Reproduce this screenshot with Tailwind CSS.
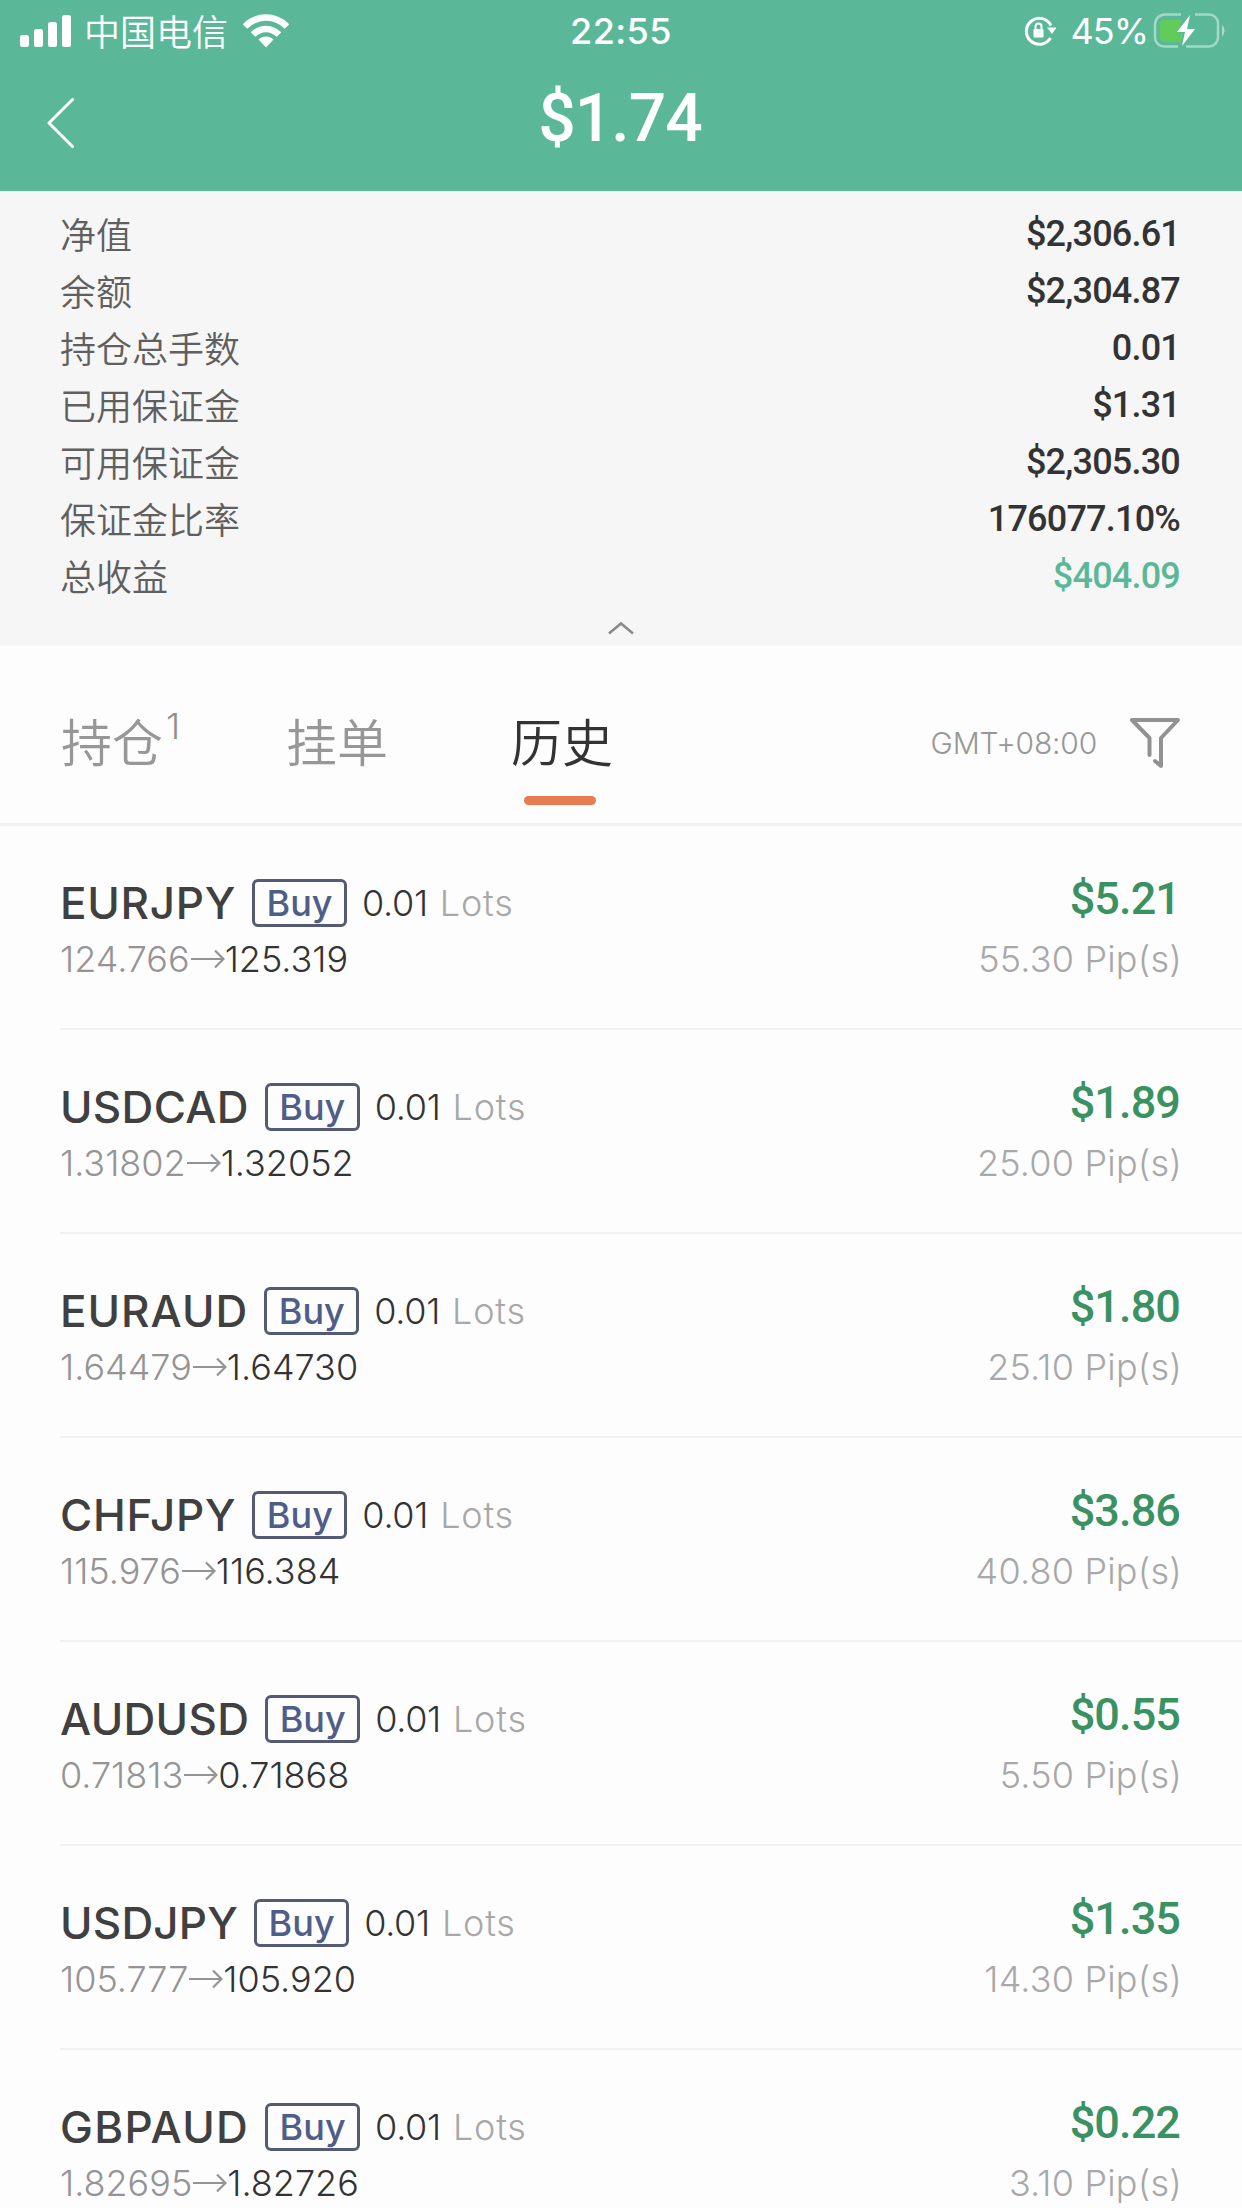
<!DOCTYPE html>
<html lang="zh-CN">
<head>
<meta charset="utf-8">
<title>历史</title>
<script src="https://cdn.jsdelivr.net/npm/@tailwindcss/browser@4"></script>
</head>
<body class="h-[2208px] w-[1242px] overflow-hidden bg-[#fdfdfd] font-['Inter','Noto_Sans_CJK_SC',sans-serif] text-4xl/[48px] text-[#333]">

<header class="h-[191px] bg-[#5ab899] text-white">
  <div class="grid h-[62px] grid-cols-3 items-center pl-5 pr-[15px]">
    <div class="flex items-center">
      <svg class="h-8 w-[52px]" viewBox="0 0 52 32" fill="#fff"><rect x="0" y="20" width="9" height="12" rx="2.5"/><rect x="14" y="14" width="9" height="18" rx="2.5"/><rect x="28" y="7" width="9" height="25" rx="2.5"/><rect x="42" y="0" width="9" height="32" rx="2.5"/></svg>
      <span class="mb-[3px] ml-3 font-['Noto_Sans_CJK_SC',sans-serif] font-[350]">中国电信</span>
      <svg class="ml-[15px] h-[34px] w-[46px]" viewBox="0 0 46 34" fill="none" stroke="#fff"><path d="M2 12.500C14 .5 32 .5 44 12.500" stroke-width="6.500"/><path d="M10 20.500c7.500-7.500 18.500-7.500 26 0" stroke-width="6.500"/><path d="M15.500 25.500c4-4 11-4 15 0L23 33.500z" fill="#fff" stroke="none"/></svg>
    </div>
    <div class="pr-[5px] text-center font-medium tracking-[0.4px]">22:55</div>
    <div class="flex items-center justify-end">
      <svg class="h-8 w-8" viewBox="0 0 32 32" fill="none" stroke="#fff" stroke-width="3"><path d="M27 10.500A13 13 0 1 0 26.500 23"/><path d="M23 12.500h9.500L28 19z" fill="#fff" stroke="none"/><rect x="9.500" y="14" width="10" height="8.500" rx="1" fill="#fff" stroke="none"/><path d="M11.500 14v-2.500a3 3 0 0 1 6 0V14" stroke-width="2"/></svg>
      <span class="ml-[15px] tracking-[-1px]">45%</span>
      <svg class="ml-[5px] h-9 w-[74px]" viewBox="0 0 74 36"><path d="M28 1.500H12A10 10 0 0 0 2 11.500v13A9 9 0 0 0 11 33.500h14M42 1.500h14A9 9 0 0 1 65 10.500v14a9 9 0 0 1-9 9H33" fill="none" stroke="#fff" stroke-opacity=".45" stroke-width="2.500"/><path d="M69 12q5 5 0 12z" fill="#fff" fill-opacity=".5"/><path d="M11 7h18L24 20h5l-1 9H11a4 4 0 0 1-4-4V11a4 4 0 0 1 4-4z" fill="#62cc5b"/><path d="M37 2 24 19h8l-3 14L42 16h-8z" fill="#fff"/></svg>
    </div>
  </div>
  <div class="grid h-[110px] grid-cols-3 items-center pl-[47px] pr-[47px]">
    <svg class="mt-3 h-[52px] w-7" viewBox="0 0 28 52" fill="none" stroke="#fff" stroke-width="3" stroke-linecap="round" stroke-linejoin="round"><path d="M25.500 2.500 2 26l23.500 23.500"/></svg>
    <h1 class="mt-1 pr-0.5 text-center font-['Roboto',sans-serif] text-[66px]/[80px] font-medium tracking-[-1px]">$1.74</h1>
  </div>
</header>

<section class="h-[455px] bg-[#f6f6f6] px-[60px] pt-[14px]">
  <dl id="summary"></dl>
  <svg class="mx-auto mt-[17px] h-3.5 w-7" viewBox="0 0 28 14" fill="none" stroke="#8a8a8a" stroke-width="2.500"><path d="M2 12.500 14 2.500l12 10"/></svg>
</section>

<nav class="flex h-[180px] items-start justify-between border-b-3 border-[#f1f1f1] pl-[61px] pr-[61px]">
  <div class="flex font-['Noto_Sans_CJK_SC',sans-serif] text-[51px]/[72px] font-[350] text-[#979797]">
    <div class="mt-[58px] flex w-[225px]">持仓<sup class="top-0 ml-[3px] mt-1 self-start font-['Inter',sans-serif] text-4xl/9 font-[350] text-[#8f8f8f]">1</sup></div>
    <div class="mt-[58px] w-[225px]">挂单</div>
    <div class="mt-[58px] flex flex-col items-center text-[#333]">历史<i class="mr-1 mt-5 h-[9px] w-[72px] rounded-full bg-[#e87c51]"></i></div>
  </div>
  <div class="mt-[71px] flex items-center">
    <span class="text-[30px]/[48px] font-[350] tracking-[-0.2px] text-[#979797]">GMT+08:00</span>
    <svg class="ml-[32px] h-[52px] w-[52px]" viewBox="0 0 52 52" fill="none" stroke="#929292" stroke-width="4" stroke-linecap="round" stroke-linejoin="round"><path d="M20.500 38V21L3 3h46L32 21v28l-6-5"/></svg>
  </div>
</nav>

<main id="orders" class="pl-[60px]"></main>

<script>
const summary = [
  ['净值', '$2,306.61'], ['余额', '$2,304.87'], ['持仓总手数', '0.01'],
  ['已用保证金', '$1.31'], ['可用保证金', '$2,305.30'],
  ['保证金比率', '176077.10%'], ['总收益', '$404.09', 'text-[#5ab899]'],
];
document.getElementById('summary').innerHTML = summary.map(([name, value, tone = 'text-[#333]']) => `
  <div class="flex h-[57px] items-center justify-between">
    <dt class="mb-px font-['Noto_Sans_CJK_SC',sans-serif] font-[350] text-[#5f5f5f]">${name}</dt>
    <dd class="pr-0.5 font-['Roboto',sans-serif] font-medium tracking-[-0.8px] ${tone}">${value}</dd>
  </div>`).join('');

const orders = [
  ['EURJPY', '124.766', '125.319', '$5.21', '55.30', 'tracking-[0.7px]'],
  ['USDCAD', '1.31802', '1.32052', '$1.89', '25.00', 'tracking-[0.3px]'],
  ['EURAUD', '1.64479', '1.64730', '$1.80', '25.10', 'tracking-[1px]'],
  ['CHFJPY', '115.976', '116.384', '$3.86', '40.80', 'tracking-[0.7px]'],
  ['AUDUSD', '0.71813', '0.71868', '$0.55', '5.50', 'tracking-[0.3px]'],
  ['USDJPY', '105.777', '105.920', '$1.35', '14.30', 'tracking-[0.2px]'],
  ['GBPAUD', '1.82695', '1.82726', '$0.22', '3.10', 'tracking-[1.3px]'],
];
document.getElementById('orders').innerHTML = orders.map(([symbol, open, close, profit, pips, spacing]) => `
  <article class="flex h-[204px] justify-between border-b-2 border-[#f1f1f1] pr-[61px]">
    <div class="pt-[53px]">
      <div class="flex h-12 items-center">
        <b class="text-[44px]/[48px] font-medium text-[#404040] ${spacing}">${symbol}</b>
        <span class="ml-4 flex h-12 w-[95px] items-center justify-center rounded-md border-3 border-[#555b74] font-medium text-[#4f5e88]">Buy</span>
        <span class="ml-[15px] font-[350] tracking-[-0.3px]">0.01</span>
        <span class="ml-3 font-light tracking-[0.8px] text-[#a8a8a8]">Lots</span>
      </div>
      <div class="mt-2 flex h-12 items-center">
        <span class="font-light text-[#949494]">${open}</span>
        <svg class="ml-px h-5 w-[34px]" viewBox="0 0 34 20" fill="none" stroke="#949494" stroke-width="2.200"><path d="M0 10h32M24 1.500l8.500 8.500-8.500 8.500"/></svg>
        <span class="font-[350]">${close}</span>
      </div>
    </div>
    <div class="pt-[49px] text-right">
      <div class="pr-px font-['Roboto',sans-serif] text-[45px]/[48px] font-medium tracking-[-0.9px] text-[#3a9162]">${profit}</div>
      <div class="-mr-px mt-3 font-light tracking-[0.2px] text-[#a8a8a8]">${pips} Pip(s)</div>
    </div>
  </article>`).join('');
</script>
</body>
</html>
